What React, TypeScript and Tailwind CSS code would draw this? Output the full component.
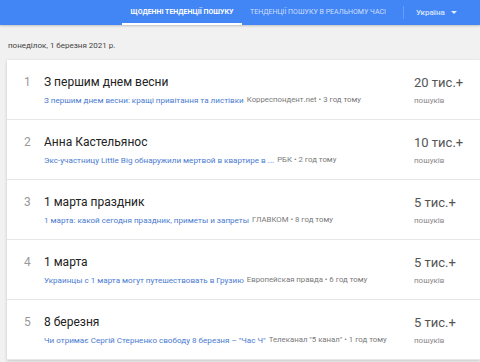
import React from "react";

const rows = [
  { n: 1, title: "З першим днем весни", link: "З першим днем весни: кращі привітання та листівки", src: "Корреспондент.net • 3 год тому", count: "20 тис.+" },
  { n: 2, title: "Анна Кастельянос", link: "Экс-участницу Little Big обнаружили мертвой в квартире в ...", src: "РБК • 2 год тому", count: "10 тис.+" },
  { n: 3, title: "1 марта праздник", link: "1 марта: какой сегодня праздник, приметы и запреты", src: "ГЛАВКОМ • 8 год тому", count: "5 тис.+" },
  { n: 4, title: "1 марта", link: "Украинцы с 1 марта могут путешествовать в Грузию", src: "Европейская правда • 6 год тому", count: "5 тис.+" },
  { n: 5, title: "8 березня", link: "Чи отримає Сергій Стерненко свободу 8 березня – \"Час Ч\"", src: "Телеканал \"5 канал\" • 1 год тому", count: "5 тис.+" },
];

export default function App() {
  return (
    <div className="w-[480px] h-[362px] overflow-hidden bg-[#f1f1f1]" style={{ fontFamily: "Roboto, 'Noto Sans', sans-serif" }}>
      <div className="h-[25px] bg-[#4285f4] flex items-stretch pl-[122px] shadow-[0_1px_2px_rgba(0,0,0,0.2)] whitespace-nowrap">
        <div className="w-[120px] shrink-0 flex items-center justify-center text-[7px] font-bold text-white border-b-[2px] border-white pt-[1px]">
          ЩОДЕННІ ТЕНДЕНЦІЇ ПОШУКУ
        </div>
        <div className="ml-[8px] shrink-0 flex items-center text-[7px] text-white/75">
          ТЕНДЕНЦІЇ ПОШУКУ В РЕАЛЬНОМУ ЧАСІ
        </div>
        <div className="ml-[17px] my-[6px] w-px shrink-0 bg-white/20" />
        <div className="ml-[12px] shrink-0 flex items-center text-[8px] font-medium text-white/80">
          Україна
          <svg width="6" height="3" viewBox="0 0 6 3" className="ml-[6px]">
            <path d="M0 0 L6 0 L3 3 Z" fill="rgba(255,255,255,0.85)" />
          </svg>
        </div>
      </div>
      <div className="h-[35px] pl-[8px] pt-[15px] text-[8px] leading-[11px] text-[#444]">
        понеділок, 1 березня 2021 р.
      </div>
      <div className="ml-[7px] bg-white shadow-[0_1px_3px_rgba(0,0,0,0.18)]">
        {rows.map((r) => (
          <div key={r.n} className="h-[60px] flex border-b border-[#e6e6e6]">
            <div className="w-[37px] pl-[17px] pt-[14px] text-[12px] leading-[16px] text-[#999]">{r.n}</div>
            <div className="flex-1 pt-[14px]">
              <div className="text-[12px] leading-[16px] text-[#222]">{r.title}</div>
              <div className="mt-[5px] flex items-center leading-[10px] whitespace-nowrap">
                <span className="text-[8.1px] text-[#4a7bd0]">{r.link}</span>
                <span className="ml-[3px] text-[7.8px] text-[#7a7a7a]">{r.src}</span>
              </div>
            </div>
            <div className="w-[66px] pt-[14px]">
              <div className="text-[13px] leading-[17px] text-[#555]">{r.count}</div>
              <div className="mt-[5px] text-[8px] leading-[10px] text-[#888]">пошуків</div>
            </div>
          </div>
        ))}
      </div>
    </div>
  );
}
